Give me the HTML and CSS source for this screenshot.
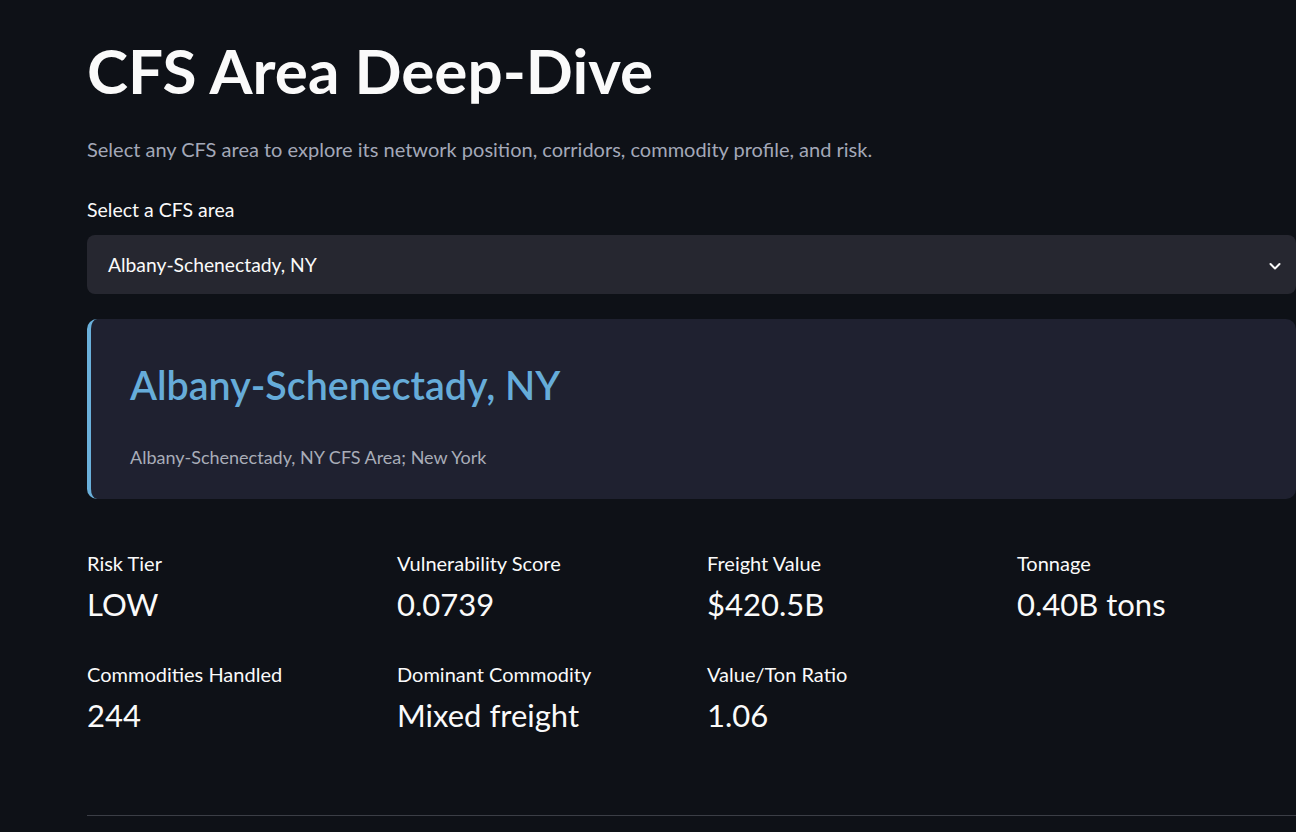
FILE: index.html
```html
<!DOCTYPE html>
<html lang="en">
<head>
    <meta charset="UTF-8">
    <meta name="viewport" content="width=device-width, initial-scale=1.0">
    <title>CFS Area Deep-Dive</title>
    <link rel="stylesheet" href="styles.css">
</head>
<body>
    <main class="block-container">
        <h1 class="page-title">CFS Area Deep-Dive</h1>
        <p class="page-caption">Select any CFS area to explore its network position, corridors, commodity profile, and risk.</p>

        <div class="area-select">
            <label class="select-label" for="cfs-area">Select a CFS area</label>
            <div class="select-box" id="cfs-area">
                <span class="select-value">Albany-Schenectady, NY</span>
                <svg class="select-chevron" width="14" height="14" viewBox="0 0 14 14" fill="none">
                    <path d="M2.5 5l4.5 4.5L11.5 5" stroke="#fafafa" stroke-width="2" stroke-linecap="round" stroke-linejoin="round"/>
                </svg>
            </div>
        </div>

        <div class="area-card">
            <h2 class="area-name">Albany-Schenectady, NY</h2>
            <p class="area-desc">Albany-Schenectady, NY CFS Area; New York</p>
        </div>

        <div class="metric-grid">
            <div class="metric">
                <div class="metric-label">Risk Tier</div>
                <div class="metric-value">LOW</div>
            </div>
            <div class="metric">
                <div class="metric-label">Vulnerability Score</div>
                <div class="metric-value">0.0739</div>
            </div>
            <div class="metric">
                <div class="metric-label">Freight Value</div>
                <div class="metric-value">$420.5B</div>
            </div>
            <div class="metric">
                <div class="metric-label">Tonnage</div>
                <div class="metric-value">0.40B tons</div>
            </div>
            <div class="metric">
                <div class="metric-label">Commodities Handled</div>
                <div class="metric-value">244</div>
            </div>
            <div class="metric">
                <div class="metric-label">Dominant Commodity</div>
                <div class="metric-value">Mixed freight</div>
            </div>
            <div class="metric">
                <div class="metric-label">Value/Ton Ratio</div>
                <div class="metric-value">1.06</div>
            </div>
        </div>

        <hr class="divider">
    </main>
</body>
</html>
```

FILE: styles.css
```css
body {
    margin: 0;
    background-color: #0e1117;
    color: #fafafa;
    font-family: Lato, "Liberation Sans", sans-serif;
    overflow: hidden;
}

.block-container {
    width: 1209px;
    padding: 0 0 0 87px;
}

.page-title {
    font-size: 62px;
    font-weight: 700;
    line-height: 1.2;
    margin: 33px 0 0;
}

.page-caption {
    font-size: 20px;
    color: #a3a8b8;
    margin: 30px 0 0;
}

.area-select {
    margin-top: 37px;
}

.select-label {
    display: block;
    font-size: 19.5px;
    margin-bottom: 14px;
}

.select-box {
    display: flex;
    align-items: center;
    justify-content: space-between;
    height: 59px;
    padding: 0 14px 0 21px;
    background-color: #262730;
    border-radius: 8px;
}

.select-value {
    font-size: 19.3px;
}

.select-chevron {
    margin-top: 3px;
}

.area-card {
    margin-top: 25px;
    padding: 42px 40px 31px 39px;
    background-color: #1f2130;
    border-left: 4px solid #6ab0db;
    border-radius: 10px;
}

.area-name {
    font-size: 39.4px;
    font-weight: 600;
    color: #66acd9;
    margin: 0;
    line-height: 1.2;
}

.area-desc {
    font-size: 18px;
    color: #a9adb8;
    margin: 37px 0 0;
}

.metric-grid {
    display: grid;
    grid-template-columns: repeat(4, 1fr);
    column-gap: 31px;
    row-gap: 39px;
    margin-top: 52px;
}

.metric-label {
    font-size: 20px;
}

.metric-value {
    font-size: 31px;
    margin-top: 10px;
}

.divider {
    border: none;
    border-top: 1px solid #3b3e46;
    margin: 81px 0 0;
}
```
